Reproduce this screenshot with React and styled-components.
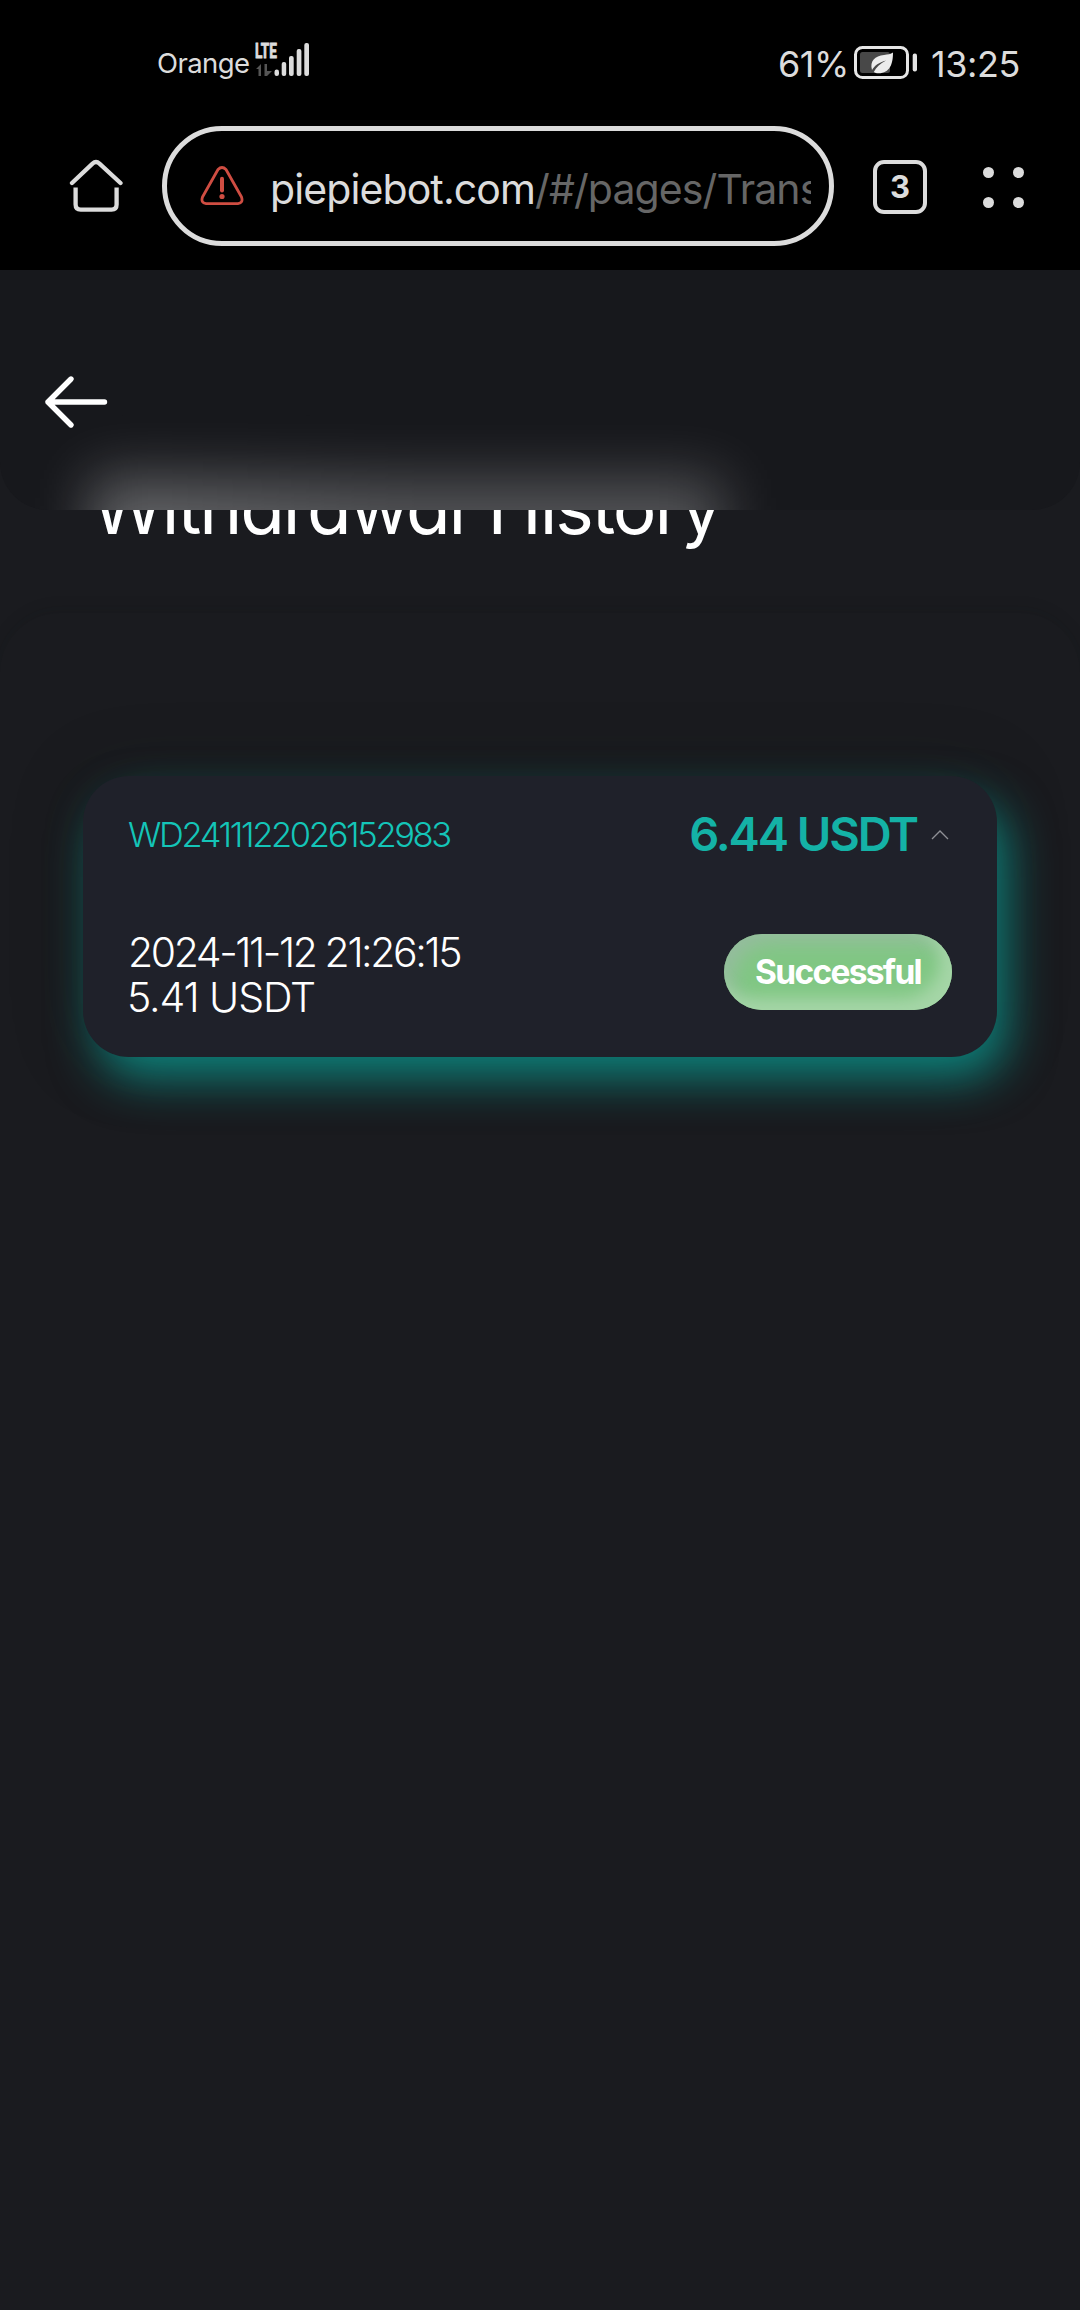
import styled, { createGlobalStyle } from 'styled-components';

const GlobalStyle = createGlobalStyle`
    * {
        box-sizing: border-box;
        margin: 0px;
        padding: 0px;
    }

    body {
        background-color: #1a1b1f;
        font-family: Inter, "Noto Sans", sans-serif;
    }
`;

const StyledPage = styled.div`
    width: 1080px;
    height: 2310px;
    overflow: hidden;
    background-color: #1a1b1f;
`;

const BrowserTop = styled.header`
    height: 270px;
    background-color: #000;
    color: #dcdcdc;
`;

const StatusBar = styled.div`
    height: 126px;
    padding: 41px 0 0 157px;
    display: flex;
    white-space: nowrap;

    svg {
        display: block;
        flex: none;
        overflow: visible;
    }
`;

const Carrier = styled.span`
    width: 97px;
    font-size: 27.5px;
    line-height: 44px;
    letter-spacing: -0.6px;
`;

const Battery = styled.span`
    width: 75px;
    margin-left: 468px;
    font-size: 36px;
    line-height: 46px;
    letter-spacing: -0.5px;
`;

const Clock = styled.span`
    margin-left: 12px;
    font-size: 36px;
    line-height: 46px;
    letter-spacing: -0.4px;
`;

const AddressRow = styled.div`
    height: 120px;
    padding-left: 68px;
    display: flex;
    align-items: center;

    > svg {
        flex: none;
    }
`;

const AddressBar = styled.div`
    width: 672px;
    height: 120px;
    margin-left: 37px;
    padding: 0 18px 0 32px;
    border: 5px solid #dcdcdc;
    border-radius: 60px;
    display: flex;
    align-items: center;

    svg {
        flex: none;
    }
`;

const Url = styled.div`
    width: 541px;
    margin-left: 25px;
    padding-top: 5px;
    font-size: 41px;
    line-height: 60px;
    letter-spacing: -0.9px;
    white-space: nowrap;
    overflow: hidden;

    span {
        color: #666;
    }
`;

const TabCount = styled.div`
    width: 54px;
    height: 54px;
    margin: 1px 0 0 39px;
    border: 4.5px solid #dcdcdc;
    border-radius: 11px;
    font-size: 31px;
    font-weight: 700;
    line-height: 46px;
    text-align: center;
`;

const DotMenu = styled.div`
    width: 41px;
    margin: 2px 0 0 56px;
    display: grid;
    grid-template-columns: 11px 11px;
    gap: 19px;

    i {
        height: 11px;
        border-radius: 50%;
        background-color: #dcdcdc;
    }
`;

const Content = styled.main`
    position: relative;
    height: 2040px;
`;

const NavBar = styled.nav`
    position: absolute;
    z-index: 2;
    top: 0;
    left: 0;
    width: 100%;
    height: 240px;
    padding: 105px 0 0 44px;
    border-radius: 0 0 48px 48px;
    background-color: #17181c;
    overflow: hidden;

    svg {
        position: relative;
    }
`;

/* haze of the title that has scrolled under the bar */
const Haze = styled.div`
    position: absolute;
    top: 209px;
    left: 92px;
    width: 630px;
    height: 120px;
    background: linear-gradient(90deg, rgba(255, 255, 255, 0.34), rgba(255, 255, 255, 0.26) 50%, rgba(255, 255, 255, 0.26));
    filter: blur(29px);
`;

const Title = styled.h1`
    height: 343px;
    padding: 192px 0 0 92px;
    color: #fff;
    font-size: 73px;
    font-weight: 400;
    line-height: 92px;
    letter-spacing: -2.1px;
    word-spacing: 5px;
    font-feature-settings: "cv11";
    white-space: nowrap;
`;

const Panel = styled.section`
    height: 1800px;
    padding: 163px 83px 0;
    border-radius: 60px;
    box-shadow: 0 -3px 16px rgba(16, 20, 20, 0.14);
`;

const Card = styled.article`
    height: 281px;
    padding: 0 45px 0 45px;
    border-radius: 46px;
    background-color: #1f212a;
    box-shadow: 12px 24px 48px -3px rgba(8, 180, 168, 0.68), 0 0 70px rgba(20, 30, 28, 0.25);
`;

const CardHead = styled.div`
    height: 116px;
    display: flex;
    align-items: center;
    justify-content: space-between;
    white-space: nowrap;
`;

const OrderId = styled.span`
    color: #14c5b8;
    font-size: 34.5px;
    font-weight: 300;
    letter-spacing: -2.35px;
`;

const Amount = styled.div`
    margin-top: -2px;
    display: flex;
    align-items: center;
    color: #14b2a6;
    font-size: 47px;
    font-weight: 600;
    letter-spacing: -2.1px;

    svg {
        margin: 3px 3px 0 14px;
    }
`;

const CardBody = styled.div`
    padding-top: 39px;
    display: flex;
    justify-content: space-between;
`;

const Details = styled.div`
    margin-top: -1px;
    color: #fff;
    font-size: 41px;
    font-weight: 300;
    line-height: 45px;
    white-space: nowrap;
`;

const Time = styled.p`
    letter-spacing: -2.4px;
`;

const Received = styled.p`
    margin-left: -1px;
    letter-spacing: -1.1px;
`;

const Badge = styled.div`
    width: 228px;
    height: 76px;
    margin-top: 3px;
    border-radius: 38px;
    background-color: #81c784;
    box-shadow: inset -12px -12px 16px #a5d6a7, inset 8px 8px 20px rgba(158, 184, 168, 0.75);
    color: #fff;
    font-size: 33.5px;
    font-weight: 700;
    line-height: 76px;
    letter-spacing: -1.7px;
    text-align: center;
`;

function SignalIcon() {
    return (
        <svg width="56" height="38" viewBox="254 43 56 38" fill="#dcdcdc">
            <text x="255" y="60" fontFamily="Roboto" fontSize="21" fontWeight="700" textLength="22" lengthAdjust="spacingAndGlyphs" stroke="#dcdcdc" strokeWidth="0.9">LTE</text>
            <path d="M256 71l5-5v12h-2.500v-7zM264.500 66h2.500v7h5l-5 5h-2.500z" fill="#555" />
            <rect x="274.500" y="71.500" width="4.500" height="6.500" rx="2.200" />
            <rect x="281.700" y="64" width="4.500" height="14" rx="2" />
            <rect x="289" y="58" width="4.700" height="20" rx="2" />
            <rect x="296.700" y="51" width="4.700" height="27" rx="2" />
            <rect x="304.300" y="45" width="4.700" height="33" rx="2" />
        </svg>
    );
}

function BatteryIcon() {
    return (
        <svg width="66" height="40" viewBox="853 41 66 40">
            <rect x="855.500" y="47.500" width="52" height="30" rx="7" fill="none" stroke="#e6e6e6" strokeWidth="3" />
            <rect x="860" y="52" width="30" height="21" rx="2.500" fill="#484848" />
            <rect x="912.700" y="53.500" width="4.300" height="18" rx="2" fill="#e6e6e6" />
            <path d="M893 52.500C893 64 890 73 878.500 73.300C876.500 73.300 875 72.800 873.800 72C876 67.500 880 63.500 886 60.500C879 62.500 874.500 65.500 872 70C869.500 61 875 56 884 55C888 54.500 890.500 54 893 52.500z" fill="#ececec" />
        </svg>
    );
}

function HomeIcon() {
    return (
        <svg width="57" height="56" viewBox="68 157 57 56" fill="none" stroke="#dcdcdc" strokeWidth="4.300" strokeLinecap="round">
            <path d="M72 182L92.500 162.600Q96 159.600 99.500 162.600L120.500 182" />
            <path d="M75.600 186.500V203.500Q75.600 208.600 80.700 208.600H111.500Q116.600 208.600 116.600 203.500V186.500" strokeLinecap="butt" />
        </svg>
    );
}

function WarningIcon() {
    return (
        <svg width="46" height="42" viewBox="199 165 46 42" fill="none" stroke="#cf4d42" strokeWidth="2.800" strokeLinecap="round" strokeLinejoin="round">
            <path d="M218 169.500Q222 165.500 226 169.500L241.500 197Q243.500 203 238 203.600H206Q200.500 203 202.500 197z" />
            <path d="M222 178.800V190.500" strokeWidth="4" />
            <circle cx="222" cy="196.500" r="2.600" fill="#cf4d42" stroke="none" />
        </svg>
    );
}

function BackIcon() {
    return (
        <svg width="64" height="54" viewBox="44 375 64 54" fill="none" stroke="#fff" strokeWidth="5.400" strokeLinecap="round" strokeLinejoin="round">
            <path d="M71 379L48 402L71 425M48 402H104.500" />
        </svg>
    );
}

function App() {
    return (
        <StyledPage>
            <GlobalStyle />
            <BrowserTop>
                <StatusBar>
                    <Carrier>Orange</Carrier>
                    <SignalIcon />
                    <Battery>61%</Battery>
                    <BatteryIcon />
                    <Clock>13:25</Clock>
                </StatusBar>
                <AddressRow>
                    <HomeIcon />
                    <AddressBar>
                        <WarningIcon />
                        <Url>piepiebot.com<span>/#/pages/Trans</span></Url>
                    </AddressBar>
                    <TabCount>3</TabCount>
                    <DotMenu><i /><i /><i /><i /></DotMenu>
                </AddressRow>
            </BrowserTop>
            <Content>
                <NavBar>
                    <Haze />
                    <BackIcon />
                </NavBar>
                <Title>Withdrawal History</Title>
                <Panel>
                    <Card>
                        <CardHead>
                            <OrderId>WD2411122026152983</OrderId>
                            <Amount>
                                6.44 USDT
                                <svg width="18" height="12" viewBox="0 0 18 12" fill="none" stroke="#8f9096" strokeWidth="1.300">
                                    <path d="M1 10L9 2L17 10" />
                                </svg>
                            </Amount>
                        </CardHead>
                        <CardBody>
                            <Details>
                                <Time>2024-11-12 21:26:15</Time>
                                <Received>5.41 USDT</Received>
                            </Details>
                            <Badge>Successful</Badge>
                        </CardBody>
                    </Card>
                </Panel>
            </Content>
        </StyledPage>
    );
}

export default App;
